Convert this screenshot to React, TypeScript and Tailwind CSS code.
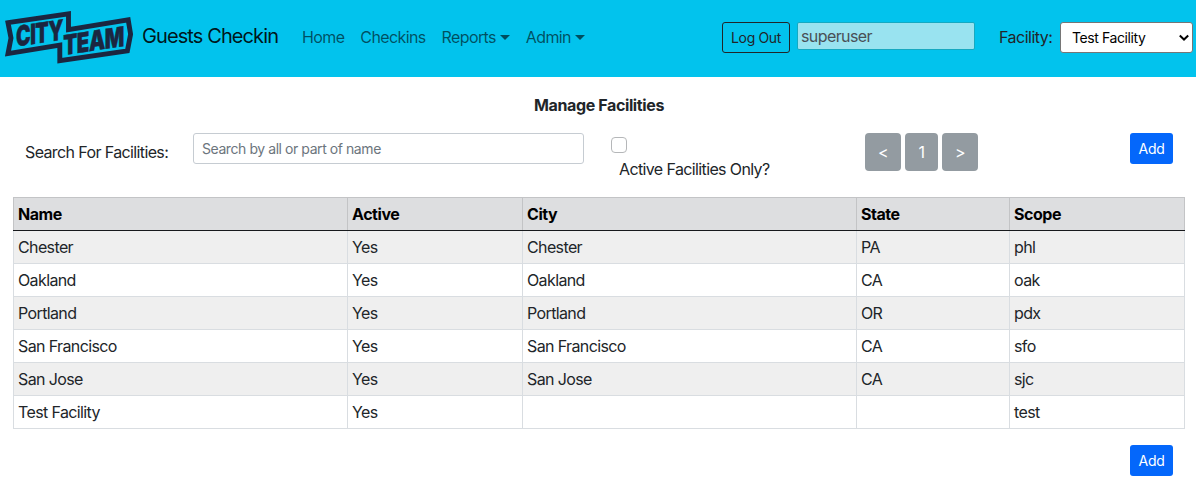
import { ReactNode } from 'react';

const facilities = [
  ['Chester', 'Yes', 'Chester', 'PA', 'phl'],
  ['Oakland', 'Yes', 'Oakland', 'CA', 'oak'],
  ['Portland', 'Yes', 'Portland', 'OR', 'pdx'],
  ['San Francisco', 'Yes', 'San Francisco', 'CA', 'sfo'],
  ['San Jose', 'Yes', 'San Jose', 'CA', 'sjc'],
  ['Test Facility', 'Yes', '', '', 'test'],
];

function Logo() {
  return (
    <svg className="h-[77px] w-[138px] shrink-0 overflow-visible" viewBox="0 0 138 77" aria-label="City Team">
      <path
        d="M8 22.7 L68.5 13.8 V29.6 L128.2 19.8 L130.6 34.2 L127.4 50.8 L59.8 60.6 V45.2 L8 53.6 L11 38 Z"
        fill="none"
        stroke="#1b2640"
        strokeWidth="4.9"
      />
      <g fill="#1b2640" stroke="#1b2640" strokeWidth="0.5" fontFamily="Inter, sans-serif" fontWeight="900">
        <text transform="matrix(1 -0.15 0 1 16 46.6)" fontSize="28" textLength="47" lengthAdjust="spacingAndGlyphs">CITY</text>
        <text transform="matrix(1 -0.15 0 1 63.3 55.2)" fontSize="27.5" textLength="60.5" lengthAdjust="spacingAndGlyphs">TEAM</text>
      </g>
    </svg>
  );
}

function NavItem({ children, menu = false }: { children: ReactNode; menu?: boolean }) {
  return (
    <a className="flex items-center px-2 text-black/60">
      {children}
      {menu && <span className="ml-1 border-x-[5px] border-t-[5px] border-x-transparent border-t-black/60" />}
    </a>
  );
}

function AddButton() {
  return (
    <button className="h-[31px] w-[43px] shrink-0 rounded-[3px] bg-[#0467fb] text-[14px] leading-[21px] tracking-[-0.35px] text-white">
      Add
    </button>
  );
}

function PageButton({ children, className }: { children: ReactNode; className: string }) {
  return <button className={`h-[38px] rounded bg-[#939ba1] text-white ${className}`}>{children}</button>;
}

export default function App() {
  return (
    <div className="h-[485px] overflow-hidden bg-white font-['Inter',sans-serif] text-[16px] leading-6 tracking-[-0.62px] text-[#212529]">
      <nav className="flex h-[77px] items-start bg-[#02c3ed]">
        <Logo />
        <span className="ml-1 mt-[21px] w-[152px] text-[20px] leading-[30px] tracking-[-0.9px] text-black/90">Guests Checkin</span>
        <div className="mt-[25px] flex">
          <NavItem>Home</NavItem>
          <NavItem>Checkins</NavItem>
          <NavItem menu>Reports</NavItem>
          <NavItem menu>Admin</NavItem>
        </div>
        <div className="ml-auto flex items-start pr-[3px] pt-[22px]">
          <button className="h-[31px] w-[68px] rounded-[3px] border border-[#212529] text-[14px] leading-[21px] tracking-[-0.35px]">Log Out</button>
          <div className="ml-[7px] h-[28px] w-[178px] rounded-[2px] border border-[#16a9c1] bg-[#99e3f0] px-[3px] leading-[27px] tracking-[-0.6px] text-[#495057]">
            superuser
          </div>
          <span className="ml-6 mt-[3px] w-[61px] tracking-[-0.5px]">Facility:</span>
          <div className="flex h-[31px] w-[133px] items-center justify-between rounded-[3px] border border-[#767676] bg-white pl-[11px] pr-[3px] text-[14px] tracking-[-0.4px] text-black">
            Test Facility
            <svg className="h-[8px] w-[10px]" viewBox="0 0 10 8" fill="none" stroke="#000" strokeWidth="2">
              <path d="M0.8 1.5 L5 5.5 L9.2 1.5" />
            </svg>
          </div>
        </div>
      </nav>

      <h1 className="mt-4 pl-[2px] text-center font-bold tracking-[-0.37px]">Manage Facilities</h1>

      <div className="mt-4 flex h-16 items-start pl-[25px] pr-[23px]">
        <span className="mt-[7px] w-[168px]">Search For Facilities:</span>
        <div className="h-[31px] w-[391px] rounded-[3px] border border-[#c6ccd2] bg-white px-2 pt-[3px] text-[14px] tracking-[-0.43px] text-[#6c757d]">
          Search by all or part of name
        </div>
        <div className="ml-[27px] w-[254px] pt-1">
          <div className="size-4 rounded-[4px] border border-[#b5b7b9] bg-white" />
          <div className="mt-1 pl-2">Active Facilities Only?</div>
        </div>
        <div className="flex gap-1">
          <PageButton className="w-[36px]">&lt;</PageButton>
          <PageButton className="w-[33px]">1</PageButton>
          <PageButton className="w-[36px]">&gt;</PageButton>
        </div>
        <div className="ml-auto flex"><AddButton /></div>
      </div>

      <table className="ml-[13px] w-[1172px] table-fixed border-collapse text-left">
        <colgroup>
          <col className="w-[334px]" />
          <col className="w-[175px]" />
          <col className="w-[334px]" />
          <col className="w-[153px]" />
          <col className="w-[175px]" />
        </colgroup>
        <thead>
          <tr className="h-[33px] bg-[#dddee0] text-black">
            {['Name', 'Active', 'City', 'State', 'Scope'].map((h) => (
              <th key={h} className="border border-[#c3c4c6] border-b-[#17191c] px-1 py-0 font-bold tracking-[-0.45px]">{h}</th>
            ))}
          </tr>
        </thead>
        <tbody>
          {facilities.map((row) => (
            <tr key={row[0]} className="h-[33px] odd:bg-[#efefef]">
              {row.map((cell, i) => (
                <td key={i} className="border border-[#d9dde1] px-1 py-0">{cell}</td>
              ))}
            </tr>
          ))}
        </tbody>
      </table>

      <div className="mt-4 flex justify-end pr-[23px]"><AddButton /></div>
    </div>
  );
}
